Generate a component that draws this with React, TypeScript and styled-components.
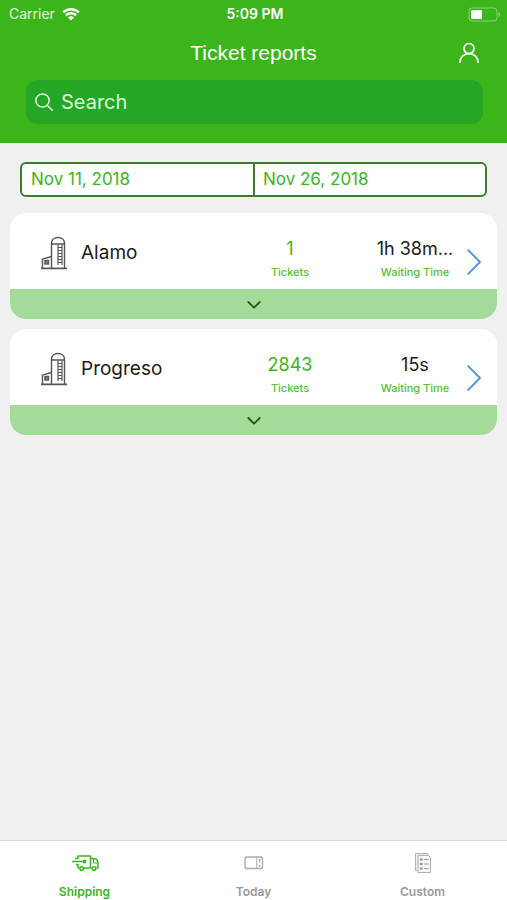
import React from "react";
import styled, { createGlobalStyle } from "styled-components";

const GlobalStyle = createGlobalStyle`
  *, *::before, *::after { box-sizing: border-box; }
  body { margin: 0; background: #f0f0f0; }
  body, button, input { font-family: Inter, "Liberation Sans", sans-serif; }
  button { border: 0; padding: 0; margin: 0; background: none; cursor: pointer; }
  svg { display: block; }
`;

const green = "#3bb51a";

const Screen = styled.div`
  min-height: 100vh;
  display: flex;
  flex-direction: column;
  background: #f0f0f0;
`;

const Header = styled.header`
  background: ${green};
  color: #fff;
  padding-bottom: 19px;
`;

const StatusBar = styled.div`
  height: 28px;
  padding: 0 6px 0 9px;
  display: grid;
  grid-template-columns: 1fr auto 1fr;
  align-items: center;
  font-size: 14px;
  line-height: 16px;
`;

const Carrier = styled.div`
  display: flex;
  align-items: center;
  gap: 7px;
  color: #e4f8dc;
`;

const Clock = styled.div`
  font-weight: 600;
`;

const Battery = styled.div`
  justify-self: end;
`;

const TitleBar = styled.div`
  height: 52px;
  padding: 0 24px 3px;
  display: grid;
  grid-template-columns: 1fr auto 1fr;
  align-items: center;
`;

const Title = styled.h1`
  grid-column: 2;
  margin: 0;
  font: 400 21px/24px "Liberation Sans", sans-serif;
`;

const ProfileButton = styled.button`
  justify-self: end;
  width: 28px;
  height: 28px;
  display: grid;
  place-items: center;
  color: #fff;
`;

const SearchField = styled.label`
  height: 44px;
  margin: 0 24px 0 26px;
  padding: 0 9px;
  display: flex;
  align-items: center;
  gap: 8px;
  border-radius: 12px;
  background: #26a626;
  color: #e0f8e0;
`;

const SearchInput = styled.input`
  flex: 1;
  min-width: 0;
  padding: 0;
  border: 0;
  outline: 0;
  background: transparent;
  color: #fff;
  font-size: 20px;
  line-height: 24px;
  &::placeholder { color: #daf6da; opacity: 1; }
`;

const Main = styled.main`
  flex: 1;
  padding: 19px 10px;
`;

const DateRange = styled.div`
  height: 35px;
  margin: 0 10px 16px;
  display: flex;
  border: 2px solid #3d7d2a;
  border-radius: 6px;
  background: #fff;
  overflow: hidden;
`;

const DateButton = styled.button`
  flex: 1;
  padding: 0 9px 1px;
  text-align: left;
  color: ${green};
  font-size: 17px;
  line-height: 20px;
  & + & {
    padding-left: 8px;
    border-left: 2px solid #3d7d2a;
  }
`;

const CardList = styled.ul`
  margin: 0;
  padding: 0;
  list-style: none;
  display: grid;
  gap: 10px;
`;

const Card = styled.li`
  border-radius: 16px;
  overflow: hidden;
  background: #fff;
`;

const CardBody = styled.div`
  height: 76px;
  padding: 3px 15px 0 30px;
  display: flex;
  align-items: center;
`;

const SiteName = styled.h2`
  flex: 1;
  margin: 0;
  padding-left: 13px;
  font-size: 19px;
  font-weight: 400;
  line-height: 24px;
  color: #1a1a1a;
`;

const Stat = styled.div`
  width: 80px;
  padding-top: 13px;
  align-self: flex-start;
  text-align: center;
  white-space: nowrap;
  & + & { margin-left: 45px; }
`;

const StatValue = styled.div<{ $accent?: boolean }>`
  font-size: 18px;
  line-height: 40px;
  height: 34px;
  color: ${(p) => (p.$accent ? green : "#1a1a1a")};
`;

const StatLabel = styled.div`
  font-size: 11px;
  font-weight: 500;
  line-height: 18px;
  color: #52c334;
`;

const OpenButton = styled.button`
  width: 16px;
  height: 28px;
  margin: 18px 0 0 11px;
  color: #4a90e2;
`;

const ExpandButton = styled.button`
  width: 100%;
  height: 30px;
  padding-top: 2px;
  display: grid;
  place-items: center;
  background: #a5db98;
  color: #1e5a14;
`;

const TabBar = styled.nav`
  height: 60px;
  display: grid;
  grid-template-columns: repeat(3, 1fr);
  border-top: 1px solid #d8d8d8;
  background: #fff;
`;

const Tab = styled.button<{ $active?: boolean }>`
  padding-top: 8px;
  display: flex;
  flex-direction: column;
  align-items: center;
  gap: 7px;
  color: ${(p) => (p.$active ? green : "#999")};
  font-size: 12px;
  font-weight: 600;
  line-height: 16px;
`;

const TabIcon = styled.span`
  height: 28px;
  display: grid;
  place-items: center;
`;

const WifiIcon = () => (
  <svg width="18" height="13" viewBox="0 0 18 13" fill="#fff" aria-hidden="true">
    <path d="M9 0C5.6 0 2.6 1.3.4 3.4l1.7 1.8C3.9 3.5 6.3 2.5 9 2.5s5.1 1 6.9 2.7l1.7-1.8C15.4 1.3 12.4 0 9 0z" />
    <path d="M9 4.1c-2.3 0-4.4.9-5.9 2.3l1.8 1.8C5.9 7.2 7.4 6.5 9 6.5s3.1.7 4.1 1.7l1.8-1.8C13.4 5 11.3 4.1 9 4.1z" />
    <path d="M9 8.2c-1.2 0-2.3.5-3.1 1.2L9 12.5l3.1-3.1C11.3 8.7 10.2 8.2 9 8.2z" />
  </svg>
);

const BatteryIcon = () => (
  <svg width="33" height="15" viewBox="0 0 33 15" aria-hidden="true">
    <rect x="1" y="1" width="28" height="13" rx="3" fill="none" stroke="#8bd576" strokeWidth="1" />
    <rect x="3" y="3" width="11" height="9" rx="1" fill="#fff" />
    <path d="M30.5 5v5c1-.4 1.7-1.4 1.7-2.5S31.5 5.4 30.5 5z" fill="#8bd576" />
  </svg>
);

const PersonIcon = () => (
  <svg width="22" height="22" viewBox="0 0 22 22" fill="none" stroke="currentColor" strokeWidth="1.7" aria-hidden="true">
    <circle cx="11" cy="6.5" r="5" />
    <path d="M1.7 21c.3-5.6 4-9.4 9.3-9.4s9 3.8 9.3 9.4" />
  </svg>
);

const SearchIcon = () => (
  <svg width="18" height="18" viewBox="0 0 18 18" fill="none" stroke="currentColor" strokeWidth="1.5" aria-hidden="true">
    <circle cx="7.5" cy="7.5" r="6.6" />
    <path d="M12.2 12.2l5 5" strokeLinecap="round" />
  </svg>
);

const SiloIcon = () => (
  <svg width="28" height="34" viewBox="0 0 28 34" fill="none" stroke="#555" strokeWidth="1.4" aria-hidden="true">
    <path d="M11.5 32V8h13v24M11.5 7.5C11.5 3.8 14.3 1.5 18 1.5s6.5 2.3 6.5 6" />
    <path d="M1 32.4h26" strokeWidth="1.7" />
    <path d="M2.5 32V23M1.7 23.3l9.8-2.8" />
    <rect x="5" y="24.5" width="3.5" height="3.5" fill="#888" />
    <path d="M18 8.5V29M22 8.5V29M18 11.5h4M18 14.5h4M18 17.5h4M18 20.5h4M18 23.5h4M18 26.5h4" strokeWidth="1.2" />
  </svg>
);

const ChevronRight = () => (
  <svg width="16" height="28" viewBox="0 0 16 28" fill="none" stroke="currentColor" strokeWidth="1.8" aria-hidden="true">
    <path d="M1.7 1.7L14 14 1.7 26.3" />
  </svg>
);

const ChevronDown = () => (
  <svg width="14" height="8" viewBox="0 0 14 8" fill="none" stroke="currentColor" strokeWidth="1.8" strokeLinecap="round" strokeLinejoin="round" aria-hidden="true">
    <path d="M1.3 1L7 6.7 12.7 1" />
  </svg>
);

const TruckIcon = () => (
  <svg width="28" height="18" viewBox="0 0 28 18" fill="none" stroke="currentColor" strokeWidth="1.5" strokeLinejoin="round" aria-hidden="true">
    <path d="M4 4.5h3V2h12.5v12H13M5 10.5h2V14h1.500M19.500 4.500H23c2.500 0 4 2.500 4 5.500v4h-1.500M19.500 14h1" />
    <path d="M22.500 5v4h4" strokeWidth="1" />
    <circle cx="10.700" cy="14.500" r="1.800" />
    <circle cx="23" cy="14.500" r="1.800" />
    <path d="M1 7.500h12" />
    <circle cx="13.500" cy="7.500" r="1.200" fill="currentColor" />
  </svg>
);

const TicketIcon = () => (
  <svg width="20" height="14" viewBox="0 0 20 14" fill="none" stroke="#aaa" aria-hidden="true">
    <rect x="1" y="1" width="17.5" height="11.5" rx="1.5" strokeWidth="1.4" />
    <path d="M12.7 1v12" />
    <path d="M15.5 3v3.5M15.5 9v2" strokeWidth="1.5" />
  </svg>
);

const ReportIcon = () => (
  <svg width="18" height="22" viewBox="0 0 18 22" fill="none" stroke="#b0b0b0" aria-hidden="true">
    <path d="M3.5 18.5H1.500V1.500h12l1 1.500" fill="#eee" />
    <path d="M4 3.500h10.500l2 2v15H4z" fill="#f5f5f5" />
    <path d="M6 7.500h2.500M6 12h2.500M6 16.500h2.500" stroke="#888" strokeWidth="2" />
    <path d="M10 7.500h4.500M10 12h4.500M10 16.500h4.500" stroke="#999" strokeWidth="1" />
  </svg>
);

const sites = [
  { name: "Alamo", tickets: "1", waiting: "1h 38m..." },
  { name: "Progreso", tickets: "2843", waiting: "15s" },
];

const tabs = [
  { label: "Shipping", icon: <TruckIcon />, active: true },
  { label: "Today", icon: <TicketIcon />, active: false },
  { label: "Custom", icon: <ReportIcon />, active: false },
];

export default function App() {
  return (
    <Screen>
      <GlobalStyle />
      <Header>
        <StatusBar>
          <Carrier>Carrier <WifiIcon /></Carrier>
          <Clock>5:09 PM</Clock>
          <Battery><BatteryIcon /></Battery>
        </StatusBar>
        <TitleBar>
          <Title>Ticket reports</Title>
          <ProfileButton aria-label="Profile"><PersonIcon /></ProfileButton>
        </TitleBar>
        <SearchField>
          <SearchIcon />
          <SearchInput type="search" placeholder="Search" aria-label="Search" />
        </SearchField>
      </Header>
      <Main>
        <DateRange role="group" aria-label="Date range">
          <DateButton>Nov 11, 2018</DateButton>
          <DateButton>Nov 26, 2018</DateButton>
        </DateRange>
        <CardList>
          {sites.map((site) => (
            <Card key={site.name}>
              <CardBody>
                <SiloIcon />
                <SiteName>{site.name}</SiteName>
                <Stat>
                  <StatValue $accent>{site.tickets}</StatValue>
                  <StatLabel>Tickets</StatLabel>
                </Stat>
                <Stat>
                  <StatValue>{site.waiting}</StatValue>
                  <StatLabel>Waiting Time</StatLabel>
                </Stat>
                <OpenButton aria-label={`Open ${site.name}`}><ChevronRight /></OpenButton>
              </CardBody>
              <ExpandButton aria-label={`Expand ${site.name}`}><ChevronDown /></ExpandButton>
            </Card>
          ))}
        </CardList>
      </Main>
      <TabBar>
        {tabs.map((tab) => (
          <Tab key={tab.label} $active={tab.active} aria-current={tab.active ? "page" : undefined}>
            <TabIcon>{tab.icon}</TabIcon>
            {tab.label}
          </Tab>
        ))}
      </TabBar>
    </Screen>
  );
}
